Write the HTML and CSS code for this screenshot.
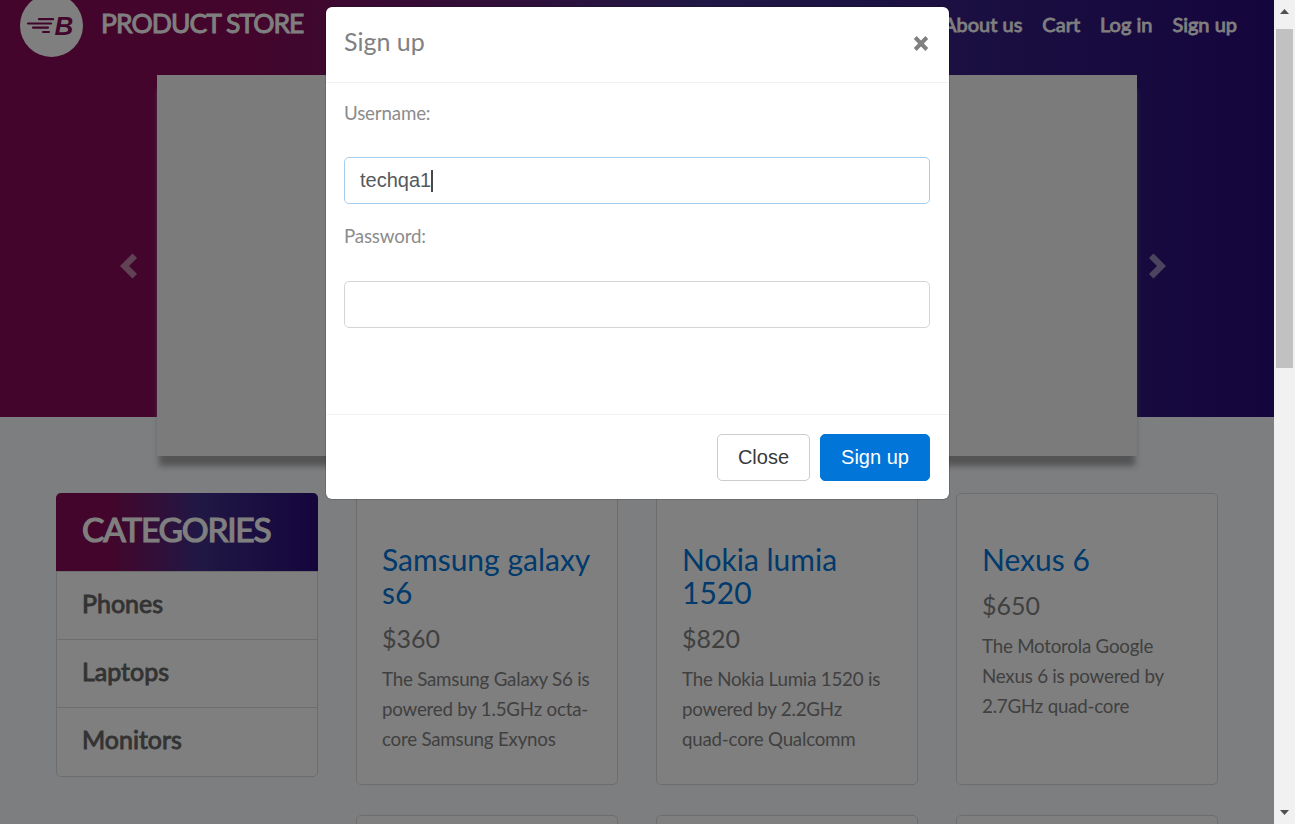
FILE: index.html
```html
<!DOCTYPE html>
<html lang="en">
<head>
<meta charset="utf-8">
<title>STORE</title>
<link rel="stylesheet" href="styles.css">
</head>
<body>
<div class="window">
  <div class="page">
    <header class="hero">
      <nav class="navbar">
        <a class="brand">
          <svg class="logo" width="63" height="63" viewBox="0 0 63 63">
            <circle cx="31.5" cy="31.5" r="31.5" fill="#fff"/>
            <g stroke="#870b57" stroke-width="2.200" stroke-linecap="round">
              <path d="M19 25.200H33M8 29.500H31M13 33.600H28M23 38H29"/>
            </g>
            <text class="logo-letter" x="34.500" y="41" fill="#870b57">B</text>
          </svg>
          <span class="brand-name">PRODUCT STORE</span>
        </a>
        <div class="nav-links"><a>About us</a><a>Cart</a><a>Log in</a><a>Sign up</a></div>
      </nav>
      <div class="carousel">
        <svg class="arrow" width="18" height="26" viewBox="0 0 18 26"><path d="M12.500 .5L17 5L9 13L17 21L12.500 25.500L0 13Z"/></svg>
        <div class="slide"></div>
        <svg class="arrow" width="18" height="26" viewBox="0 0 18 26"><path d="M5.500 .5L1 5L9 13L1 21L5.500 25.500L18 13Z"/></svg>
      </div>
    </header>
    <main class="content">
      <aside class="categories">
        <div class="cat-title">CATEGORIES</div>
        <a class="cat">Phones</a>
        <a class="cat">Laptops</a>
        <a class="cat">Monitors</a>
      </aside>
      <section class="products">
        <article class="card"><h4>Samsung galaxy s6</h4><h5>$360</h5><p>The Samsung Galaxy S6 is powered by 1.5GHz octa-core Samsung Exynos</p></article>
        <article class="card"><h4>Nokia lumia 1520</h4><h5>$820</h5><p>The Nokia Lumia 1520 is powered by 2.2GHz quad-core Qualcomm</p></article>
        <article class="card"><h4>Nexus 6</h4><h5>$650</h5><p>The Motorola Google Nexus 6 is powered by 2.7GHz quad-core</p></article>
        <article class="card"></article>
        <article class="card"></article>
        <article class="card"></article>
      </section>
    </main>
  </div>
  <div class="scrollbar">
    <svg width="9" height="5" viewBox="0 0 9 5"><path d="M4.500 0L9 5H0Z"/></svg>
    <div class="thumb"></div>
    <svg width="9" height="5" viewBox="0 0 9 5"><path d="M4.500 5L9 0H0Z"/></svg>
  </div>
  <div class="backdrop">
    <div class="modal">
      <div class="modal-header">
        <span class="modal-title">Sign up</span>
        <svg class="close" width="16" height="15" viewBox="0 0 16 15"><path d="M2.200 1.500L13.800 13.500M13.800 1.500L2.200 13.500"/></svg>
      </div>
      <div class="modal-body">
        <label>Username:</label>
        <div class="field focused">techqa1<span class="caret"></span></div>
        <label>Password:</label>
        <div class="field"></div>
      </div>
      <div class="modal-footer">
        <button class="btn">Close</button>
        <button class="btn primary">Sign up</button>
      </div>
    </div>
  </div>
</div>
</body>
</html>
```
FILE: styles.css
```css
* { box-sizing: border-box; }
body { margin: 0; font-family: Lato, sans-serif; color: #818181; overflow: hidden; }
.window { display: flex; width: 1295px; height: 824px; overflow: hidden; position: relative; }
.page { width: 1274px; height: 824px; overflow: hidden; background: #fafcff; }

.hero {
  height: 417px;
  background: linear-gradient(to right, #870b57 20%, #41308a 55%, #290c7a 100%);
}
.navbar { display: flex; justify-content: space-between; height: 75px; padding: 0 37px 0 20px; }
.brand { display: flex; }
.logo { margin-top: -6px; }
.logo-letter { font: italic bold 26px "Liberation Sans", sans-serif; }
.brand-name { margin: 6px 0 0 18px; font-size: 26.500px; line-height: 34px; color: #fff; -webkit-text-stroke: .9px #fff; letter-spacing: -.95px; white-space: nowrap; }
.nav-links { display: flex; gap: 20px; padding-top: 9px; font-size: 20px; line-height: 30px; color: #fff; -webkit-text-stroke: .8px #fff; white-space: nowrap; }
.carousel { display: flex; align-items: center; height: 381px; padding-left: 120px; }
.slide { flex: none; width: 980px; height: 381px; margin: 0 11px 0 19px; background: #f6f6f6; box-shadow: 0 12px 6px -2px #a8a9ab; }
.arrow { fill: #fff; opacity: .5; flex: none; }

.content { display: flex; gap: 38px; padding: 76px 56px 0; }
.categories { width: 262px; height: 284px; border: 1px solid #dadada; border-radius: 5px; background: #fff; flex: none; }
.cat-title {
  height: 78px; margin: -1px -1px 0; padding: 17px 26px; color: #fff; border-radius: 5px 5px 0 0;
  background: linear-gradient(to right, #870b57 20%, #41308a 55%, #290c7a 100%);
  font-size: 33.500px; line-height: 38px; letter-spacing: -1.200px; -webkit-text-stroke: 1.200px #fff;
}
.cat { display: block; height: 68px; padding: 14px 25px; border-top: 1px solid #dadada; font-size: 25px; line-height: 34px; color: #666; -webkit-text-stroke: .9px #666; }
.products { display: grid; grid-template-columns: repeat(3, 262px); grid-auto-rows: 292px; gap: 30px 38px; }
.card { border: 1px solid #dadada; border-radius: 5px; background: #fff; padding: 49px 25px 0; }
.card h4 { margin: 0 0 15px; font-size: 30px; line-height: 33px; font-weight: 400; color: #0275d8; }
.card h5 { margin: 0 0 12px; font-size: 25px; line-height: 28px; font-weight: 400; }
.card p { margin: 0; font-size: 18.750px; line-height: 30px; letter-spacing: -.23px; }

.scrollbar { display: flex; flex-direction: column; align-items: center; width: 21px; padding: 9px 0 9px; background: #f1f1f1; fill: #505050; }
.thumb { width: 17px; height: 339px; margin: 15px 0 auto; background: #c1c1c1; flex: none; }

.backdrop { position: absolute; inset: 0 21px 0 0; background: rgba(0, 0, 0, .5); padding: 7px 0 0 326px; }
.modal { width: 623px; height: 492px; border-radius: 6px; background: #fff; box-shadow: 0 0 0 1px rgba(0, 0, 0, .15); }
.modal-header { display: flex; justify-content: space-between; height: 76px; padding: 15px 20px 0 18px; border-bottom: 1px solid #f1f2f3; }
.modal-title { font-size: 25px; line-height: 38px; }
.close { stroke: #808080; stroke-width: 4; margin-top: 14px; }
.modal-body { height: 331px; padding: 15px 19px 0 18px; }
.modal-body label { display: block; height: 30px; margin-bottom: 29px; font-size: 18.750px; line-height: 30px; letter-spacing: -.18px; color: #8c8c8c; }
.field { display: flex; align-items: center; height: 47px; margin-bottom: 18px; padding: 0 15px; border: 1px solid #d5d5d5; border-radius: 5px; font: 20px "Liberation Sans", sans-serif; color: #55595c; }
.field.focused { border-color: #a6cdef; margin-bottom: 17px; }
.field:last-child { margin-top: 30px; }
.caret { width: 2px; height: 22px; background: #464a4c; }
.modal-footer { display: flex; justify-content: flex-end; gap: 10px; height: 85px; padding: 19px 19px 0; border-top: 1px solid #f1f2f3; }
.btn { height: 47px; width: 93px; border: 1px solid #ccc; border-radius: 5px; background: #fff; font: 20px "Liberation Sans", sans-serif; color: #373a3c; padding: 0; }
.btn.primary { width: 110px; border-color: #0275d8; background: #0275d8; color: #fff; }
```
